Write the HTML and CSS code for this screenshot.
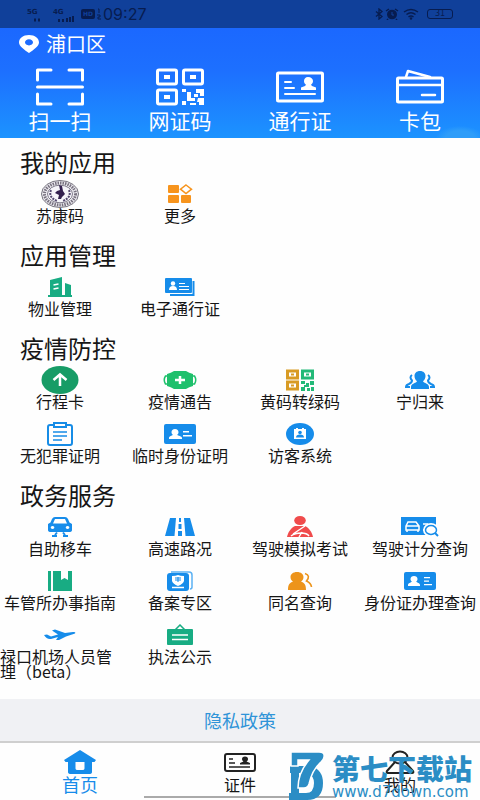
FILE: index.html
```html
<!DOCTYPE html>
<html lang="zh-CN">
<head>
<meta charset="utf-8">
<meta name="viewport" content="width=device-width, initial-scale=1">
<title>首页</title>
<link rel="stylesheet" href="styles.css">
</head>
<body>
<div class="status">
  <div class="status-side">
    <span class="signal"><b>5G</b><svg width="20" height="20" viewBox="0 0 20 20"><path d="M7 14.500h2v3H7zM11 14.500h2v3h-2z"/></svg></span>
    <span class="signal"><b>4G</b><svg width="22" height="20" viewBox="0 0 22 20"><path d="M5 15h2v3H5zM9 15h2v3H9zM13 14h2v4h-2zM16 13h2v5h-2zM19 12h2v6h-2z"/></svg></span>
    <span class="hd">HD</span>
    <svg width="4" height="12" viewBox="0 0 4 12"><path d="M1 1h1v4M0 7h3v2H1v2h3" fill="none" stroke="#071c50"/></svg>
    <span class="time">09:27</span>
  </div>
  <div class="status-side">
    <svg width="8" height="12" viewBox="0 0 8 12"><path d="M1 3.500l6 5L4 11V1l3 2.500-6 5" fill="none" stroke="#071c50" stroke-width="1.300"/></svg>
    <svg width="14" height="12" viewBox="0 0 14 12"><ellipse cx="7" cy="6.500" rx="5" ry="4.800"/><path d="M1 3l3-2M13 3l-3-2M3 11l-1 1M11 11l1 1" stroke="#071c50" stroke-width="1.500"/><path d="M7 4v3h2" fill="none" stroke="#10409a"/></svg>
    <svg class="wifi" width="16" height="12" viewBox="0 0 16 12"><path d="M1 4q7-5 14 0M3.500 6.500q4.500-3.500 9 0M5.500 9q2.500-2 5 0" fill="none" stroke="#071c50" stroke-width="1.500"/><circle cx="8" cy="10.500" r="1.200"/></svg>
    <span class="battery">31</span>
  </div>
</div>

<header class="hero">
  <div class="place">
    <svg width="20" height="18" viewBox="0 0 20 18"><path fill-rule="evenodd" fill="#fff" d="M10 0C4 0 0 3.300 0 7.500 0 11 5 14.500 10 18c5-3.500 10-7 10-10.500C20 3.300 16 0 10 0zm0 4.200c2.300 0 4 1.400 4 3.100s-1.700 3.100-4 3.100-4-1.400-4-3.100 1.700-3.100 4-3.100z"/></svg>
    <span>浦口区</span>
  </div>
  <nav class="quick">
    <a href="#"><svg width="48" height="38" viewBox="0 0 48 38" fill="none" stroke="#fff" stroke-width="3" stroke-linecap="round" stroke-linejoin="round"><path d="M1.500 12V2H15M33 2h13.500v10M1.500 26v10H15M33 36h13.500V26M1.500 19h45"/></svg>扫一扫</a>
    <a href="#"><svg width="48" height="38" viewBox="0 0 48 38"><g fill="none" stroke="#fff" stroke-width="3"><rect x="1.500" y="2" width="19" height="14" rx="1.500"/><rect x="27.500" y="2" width="19" height="14" rx="1.500"/><rect x="1.500" y="22" width="19" height="14" rx="1.500"/></g><path fill="#fff" d="M8 7h6v4H8zM34 7h6v4h-6zM8 27h6v4H8zM26 21h4v3h-4zM31 24h4v6h4v3h-8zM40 21h8v7h-4v-3h-4zM38 26h4v3h-4zM26 33h4v4h-4zM42 30h6v7h-5v-3h-2zM34 35h6v2h-6z"/></svg>网证码</a>
    <a href="#"><svg width="48" height="38" viewBox="0 0 48 38" fill="none" stroke="#fff" stroke-width="3" stroke-linecap="round"><rect x="1.500" y="5" width="45" height="28" rx="1"/><path d="M9 14h6M9 20h9M9 26h30" stroke-width="2"/><path fill="#fff" stroke="none" d="M32 9c-2.500 0-4 1.700-4 4 0 1.700.8 3 2 3.800L29 18l-4 1.500V22h15v-2.500L36 18l-1-1.200c1-.8 2-2.100 2-3.800 0-2.300-2-4-5-4z"/></svg>通行证</a>
    <a href="#"><svg width="48" height="38" viewBox="0 0 48 38" fill="none" stroke="#fff" stroke-width="3" stroke-linejoin="round"><rect x="1.500" y="10" width="45" height="24" rx="1"/><path d="M2 17h44M10 9l2-6 22 6M26 27h13" stroke-linecap="round" stroke-width="2.500"/></svg>卡包</a>
  </nav>
</header>

<main>
  <section>
    <h2>我的应用</h2>
    <div class="apps">
      <a href="#"><svg width="38" height="28" viewBox="0 0 38 28"><ellipse cx="19" cy="14" rx="18.500" ry="13.500" fill="#eeedf2" stroke="#77747f"/><ellipse cx="19" cy="14" rx="15.500" ry="11" fill="none" stroke="#77717f" stroke-width="3" stroke-dasharray="1.500 1"/><ellipse cx="19" cy="14" rx="12.500" ry="8.800" fill="#f6f5fa" stroke="#807c8b"/><path d="M10 10q-3 7 6 11M28 10q3 7-6 11" fill="none" stroke="#554a70" stroke-width="2" stroke-dasharray="2 1"/><path fill="#33204f" d="M18 5l3 1 1 5 2 3-3 3-1 2h-3l1-4-4-2 2-2 3-1z"/></svg><span>苏康码</span></a>
      <a href="#"><svg width="26" height="20" viewBox="0 0 26 20" fill="#f7941d"><rect x="1" y="1" width="11" height="8" rx="1"/><rect x="1" y="11" width="11" height="8" rx="1"/><rect x="14" y="11" width="10" height="8" rx="1"/><path d="M19 1l5.500 4.200L19 9.500l-5.500-4.300z" fill="#fff" stroke="#f7941d" stroke-width="1.500"/></svg><span>更多</span></a>
    </div>
  </section>
  <section>
    <h2>应用管理</h2>
    <div class="apps">
      <a href="#"><svg width="24" height="20" viewBox="0 0 24 20" fill="#18ac83"><path d="M2 3l12-3v18h3V6l6 2v10h1v2H0v-2h2z"/><path d="M5.500 8l5-1M5.500 12l5-1" stroke="#fff" stroke-width="1.400"/></svg><span>物业管理</span></a>
      <a href="#"><svg width="30" height="18" viewBox="0 0 30 18"><path d="M28.500 3v14H5" fill="none" stroke="#168cea" stroke-width="2"/><rect width="27" height="15" rx="1" fill="#168cea"/><circle cx="8" cy="5.500" r="2.200" fill="#fff"/><path d="M4 12q0-4 4-4t4 4zM14 5h6v1h-6zM14 8h10v1H14zM14 11h10v1H14z" fill="#fff"/></svg><span>电子通行证</span></a>
    </div>
  </section>
  <section>
    <h2>疫情防控</h2>
    <div class="apps">
      <a href="#"><svg width="38" height="28" viewBox="0 0 38 28"><ellipse cx="19" cy="14" rx="18.500" ry="14" fill="#179c66"/><path d="M19 20V9M12.500 14L19 8.500l6.500 5.500" fill="none" stroke="#fff" stroke-width="2.500"/></svg><span>行程卡</span></a>
      <a href="#"><svg width="34" height="18" viewBox="0 0 34 18"><path d="M5 5H2.500Q0 9 2.500 13H5M29 5h2.500q2.500 4 0 8H29" fill="none" stroke="#1fc06c" stroke-width="1.500"/><path d="M4 3Q8 2 11 0h12q3 2 7 3v12q-4 1-7 3H11q-3-2-7-3z" fill="#1fc06c"/><path d="M17 5v8M12 9h10" stroke="#fff" stroke-width="2.500"/></svg><span>疫情通告</span></a>
      <a href="#"><svg width="28" height="22" viewBox="0 0 28 22" fill="none"><path d="M1.500 2h10v7h-10zM1.500 13h10v7h-10z" stroke="#d89b24" stroke-width="3"/><path d="M16.500 2h10v7h-10z" stroke="#23b978" stroke-width="3"/><path d="M5 4.500h3v2H5zM5 15.500h3v2H5z" fill="#d89b24"/><path fill="#23b978" d="M20 4.500h3v2h-3zM15 12h4v3h-4zM20 14h3v4h-3zM24 12h4v4h-4zM15 18h4v4h-4zM21 19h3v3h-3zM25 18h3v4h-3zM18 16h3v2h-3z"/></svg><span>黄码转绿码</span></a>
      <a href="#"><svg width="30" height="18" viewBox="0 0 30 18"><path fill="#168cea" d="M15 0c-3.500 0-5.500 2.300-5.500 5 0 2.200 1 4 2.500 5.200-.3 1.800-6 2-6 5.800v2h18v-2c0-3.800-5.700-4-6-5.800 1.500-1.200 2.500-3 2.500-5.200 0-2.700-2-5-5.500-5z"/><path d="M7 4Q4 6 7 9.500q0 2-3 3.500-3 1-3 3h4M23 4q3 2 0 5.500 0 2 3 3.500 3 1 3 3h-4" fill="none" stroke="#168cea" stroke-width="2"/></svg><span>宁归来</span></a>
      <a href="#"><svg width="28" height="26" viewBox="0 0 28 26" fill="none" stroke="#178ce6" stroke-width="2"><rect x="2" y="4" width="24" height="20" rx="2"/><path d="M8 2h12v4H8z" fill="#fff"/><path d="M7 11h14M7 15h14M7 19h9" stroke-width="1.500"/></svg><span>无犯罪证明</span></a>
      <a href="#"><svg width="32" height="20" viewBox="0 0 32 20"><rect width="32" height="20" rx="2" fill="#168cea"/><path fill="#fff" d="M11 5c-2.300 0-3.500 1.500-3.500 3.200 0 1.200.6 2 1.300 2.600C8 12 5 12 5 14v1h13v-1c0-2-4-2-4.800-3.200.8-.6 1.300-1.400 1.300-2.600C14.500 6.500 13.300 5 11 5zM19 7h6v1.500h-6zM19 11h9v1.500h-9z"/></svg><span>临时身份证明</span></a>
      <a href="#"><svg width="28" height="22" viewBox="0 0 28 22"><ellipse cx="14" cy="11" rx="14" ry="11" fill="#168cea"/><path fill="#fff" d="M8 6h2V5h2v1h4V5h2v1h2v10H8z"/><circle cx="14" cy="9.500" r="1.800" fill="#168cea"/><path d="M10 14.500q0-3 4-3t4 3z" fill="#168cea"/></svg><span>访客系统</span></a>
    </div>
  </section>
  <section>
    <h2>政务服务</h2>
    <div class="apps">
      <a href="#"><svg width="24" height="20" viewBox="0 0 24 20" fill="#168cea"><path fill-rule="evenodd" d="M7 0h10q2 0 3 2l1.500 3.500L24 7v6q0 2-3 2H3q-3 0-3-2V7l2.500-1.500L4 2q1-2 3-2zm0 2L5 6.500h14L17 2zM4.500 9a1.800 1.500 0 1 0 .1 0zM19.500 9a1.800 1.500 0 1 0 .1 0z"/><path d="M9 15.500l-2 2.500M15 15.500l2 2.500M4 19h5M15 19h5" stroke="#168cea" stroke-width="2"/></svg><span>自助移车</span></a>
      <a href="#"><svg width="30" height="18" viewBox="0 0 30 18" fill="#168cea"><path d="M5 0h6L9.500 18H0zM19 0h6l5 18h-9.500zM14 0h2v4h-2zM13.500 6h3v5h-3zM13 13h4v5h-4z"/></svg><span>高速路况</span></a>
      <a href="#"><svg width="26" height="22" viewBox="0 0 26 22"><ellipse cx="13" cy="4.500" rx="5.800" ry="4.500" fill="#f04b4c"/><path d="M8 10h10c4 2 7 6 8 11H0c1-5 4-9 8-11z" fill="#f04b4c"/><path d="M18 10L6 18M4 20q4-3 10-3t8 3M15 16l-3 5" fill="none" stroke="#fff" stroke-width="1.400"/></svg><span>驾驶模拟考试</span></a>
      <a href="#"><svg width="38" height="20" viewBox="0 0 38 20"><path fill="#168cea" d="M0 0h35v18H0z"/><path fill="none" stroke="#fff" stroke-width="1.500" d="M5 9l2-4h8l3 4v4H5zM5 9h13M6 13v2M17 13v2M22 7h5M22 13h2"/><ellipse cx="30" cy="13" rx="6" ry="5" fill="#168cea" stroke="#fff" stroke-width="4"/><ellipse cx="30" cy="13" rx="5.500" ry="4.500" fill="#fff" stroke="#168cea" stroke-width="1.500"/><path d="M34 16l3 3" stroke="#168cea" stroke-width="2"/></svg><span>驾驶计分查询</span></a>
      <a href="#"><svg width="24" height="20" viewBox="0 0 24 20" fill="#18ac83"><path d="M0 0h3v20H0zM5 0h8v9l3.500-2L20 9V0h4v20H5z"/></svg><span>车管所办事指南</span></a>
      <a href="#"><svg width="26" height="20" viewBox="0 0 26 20"><path d="M4 1h18q3 0 3 3v12q0 2-2 2" fill="none" stroke="#5bb1f3" stroke-width="1.500"/><rect y="2" width="22" height="18" rx="3" fill="#168cea"/><path d="M5 5q4 0 6-1 2 1 6 1v5q-1 3-6 5-5-2-6-5z" fill="#fff"/><path d="M8 7h6M8 9h6M11 6v5" stroke="#168cea"/><path d="M5 16.500h12" stroke="#fff" stroke-width="1.500"/></svg><span>备案专区</span></a>
      <a href="#"><svg width="26" height="18" viewBox="0 0 26 18"><path fill="#ed941b" d="M10 0C6 0 3.500 2.200 3.500 5c0 2 1 3.500 2.500 4.500C3 11 1 12 1 18h18c0-6-2-7-5-8.500 1.500-1 2.500-2.500 2.500-4.500C16.500 2.200 14 0 10 0z"/><path d="M18 1.500q6 2 1.500 7.500Q24 11 24.500 15" fill="none" stroke="#ed941b" stroke-width="1.600"/></svg><span>同名查询</span></a>
      <a href="#"><svg width="32" height="18" viewBox="0 0 32 18"><rect width="32" height="18" rx="2" fill="#168cea"/><path fill="#fff" d="M10 4C8 4 6.500 5.300 6.500 7c0 1.200.6 2 1.300 2.600C7 11 4 11 4 13v1h12v-1c0-2-3-2-3.800-3.400C13 9 13.500 8.200 13.500 7c0-1.700-1.500-3-3.500-3zM20 5h6v1.300h-6zM20 8.500h5v1.300h-5zM20 12h8v1.300h-8z"/></svg><span>身份证办理查询</span></a>
      <a href="#"><svg width="32" height="12" viewBox="0 0 32 12"><path fill="#168cea" d="M0 6l3-.5 4 2 7-2L8 1.500l3-1 10 3.500 8-1c2 0 3 .5 2 1.500L22 7.500 15 11h-3l2-3-7 2C4 10.500 2 9 0 6z"/></svg><span class="long">禄口机场人员管理（beta）</span></a>
      <a href="#"><svg width="28" height="22" viewBox="0 0 28 22"><path d="M9 6l5-5 5 5" fill="none" stroke="#18ac83" stroke-width="1.500"/><rect x="1" y="5" width="26" height="16" rx="1" fill="#18ac83"/><path d="M6 11h16M6 15.500h16" stroke="#fff" stroke-width="1.500"/></svg><span>执法公示</span></a>
    </div>
  </section>
</main>

<a class="privacy" href="#">隐私政策</a>

<footer class="tabs">
  <a class="active" href="#"><svg width="32" height="24" viewBox="0 0 32 24"><path fill="#168cea" fill-rule="evenodd" d="M16 0l16 10-1.500 2H28v10q0 2-3 2H7q-3 0-3-2V12H1.500L0 10zM11.500 12v6.500q0 1.500 2 1.500h5q2 0 2-1.500V12z"/></svg>首页</a>
  <a href="#"><svg width="32" height="24" viewBox="0 0 32 24" fill="none" stroke="#222" stroke-width="2"><rect x="1" y="4" width="30" height="17" rx="2"/><path d="M5 9h4M5 13h6M5 17h21" stroke-width="1.500"/><path d="M21 6.500c-2 0-3 1.200-3 2.500s.7 2 1.500 2.500L16 13v1.500h10V13l-3.500-1.500C23.500 11 24 10.300 24 9s-1-2.500-3-2.500z" fill="#222" stroke="none"/></svg>证件</a>
  <a href="#"><svg width="32" height="24" viewBox="0 0 32 24" fill="none" stroke="#222" stroke-width="2" stroke-linejoin="round"><ellipse cx="16" cy="7.500" rx="7.500" ry="6"/><path d="M11 12L3 21q-1 2 1 2h24q2 0 1-2l-8-9"/></svg>我的</a>
  <i class="home-bar"></i>
  <div class="watermark">
    <svg width="36" height="48" viewBox="0 0 36 48"><path fill="#2b8dc5" fill-rule="evenodd" d="M1 14h21q12 4 12 17 0 17-16 17H0v-7h2V21H1zM10 21v20h7q8 0 8-10 0-7-6-10z"/><path d="M2 0h28q6 0 5 5 0 2-3 5-9 8-12 22-1 4-5 4h-6Q9 21 20 8H9v6H2z" fill="#2b8dc5" stroke="#fff" stroke-width="1.500"/></svg>
    <div><strong>第七下载站</strong><span>www.d7down.com</span></div>
  </div>
</footer>
</body>
</html>
```
FILE: styles.css
```css
* {
  box-sizing: border-box;
}

body {
  margin: 0;
  background: #fefefe;
  color: #161616;
  font-family: "Noto Sans CJK SC", sans-serif;
  font-size: 16px;
  line-height: 16px;
}

a {
  color: inherit;
  text-decoration: none;
}

svg {
  flex: none;
}

.status {
  display: flex;
  justify-content: space-between;
  height: 28px;
  padding: 0 27px;
  background: #10409a;
  color: #071c50;
  fill: #071c50;
}

.status-side {
  display: flex;
  align-items: center;
  gap: 2px;
}

.signal {
  position: relative;
  display: flex;
  margin-right: 4px;
}

.signal b {
  position: absolute;
  top: 4px;
  left: 0;
  font: bold 7px/8px "DejaVu Sans", sans-serif;
}

.hd {
  padding: 0 2px;
  border-radius: 2px;
  background: #071c50;
  color: #10409a;
  font: bold 6px/10px "DejaVu Sans", sans-serif;
}

.time {
  font-family: Inter, sans-serif;
}

.wifi {
  margin: 0 6px 0 2px;
}

.battery {
  width: 26px;
  border: 1px solid #071c50;
  border-radius: 3px;
  font: 8px/8px "DejaVu Sans", sans-serif;
  text-align: center;
}

.hero {
  padding: 6px 0 7px;
  background:
    radial-gradient(ellipse 24px 12px at 460px 110px, #2f9df9 60%, transparent),
    linear-gradient(#1b68ff, #1d70ff 40%, #1c93ff);
  color: #fff;
}

.place {
  display: flex;
  align-items: center;
  gap: 7px;
  padding-left: 19px;
  font-size: 20px;
  line-height: 20px;
}

.quick {
  display: grid;
  grid-template-columns: repeat(4, 1fr);
  padding-top: 14px;
}

.quick a {
  display: flex;
  flex-direction: column;
  align-items: center;
  gap: 3px;
  font-size: 21px;
  line-height: 22px;
}

main {
  display: flex;
  flex-direction: column;
  gap: 20px;
  padding-top: 12px;
}

h2 {
  margin: 0;
  padding: 0 20px 6px;
  font-size: 24px;
  font-weight: 400;
  line-height: 24px;
}

.apps {
  display: grid;
  grid-template-columns: repeat(4, 1fr);
  row-gap: 11px;
}

.apps a {
  display: grid;
  grid-template-rows: 28px auto;
  align-content: start;
  justify-items: center;
  align-items: center;
  line-height: 15px;
  white-space: nowrap;
}

.apps .long {
  white-space: normal;
}

.privacy {
  display: block;
  margin-top: 20px;
  border-bottom: 2px solid #cfcfcf;
  background: #f0f1f4;
  color: #2f94d8;
  font-size: 18px;
  line-height: 42px;
  text-align: center;
}

.tabs {
  position: relative;
  display: grid;
  grid-template-columns: repeat(3, 1fr);
  padding: 7px 0 7px;
}

.tabs a {
  display: flex;
  flex-direction: column;
  align-items: center;
  gap: 1px;
  line-height: 18px;
}

.tabs .active {
  color: #168cea;
  font-size: 18px;
}

.home-bar {
  position: absolute;
  bottom: 2px;
  left: 30%;
  width: 40%;
  height: 2px;
  background: #aaa;
}

.watermark {
  position: absolute;
  top: 9px;
  right: 8px;
  display: flex;
  gap: 7px;
  color: #2b8dc5;
}

.watermark div {
  display: flex;
  flex-direction: column;
}

.watermark strong {
  font-size: 28px;
  font-weight: 900;
  line-height: 32px;
}

.watermark span {
  font-family: "DejaVu Sans", sans-serif;
  font-size: 15px;
  line-height: 16px;
}
```
